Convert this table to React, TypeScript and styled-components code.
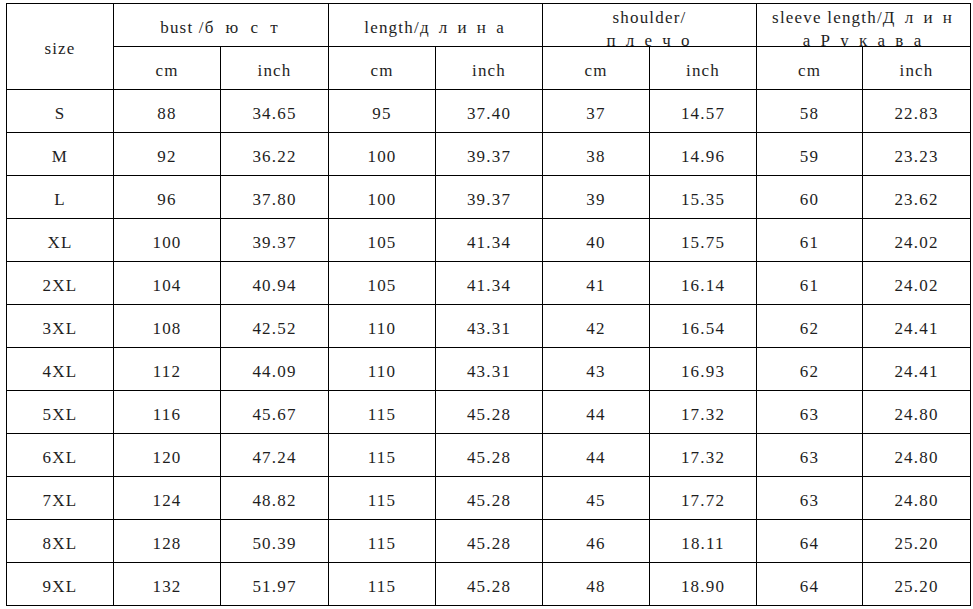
import React from 'react';
import styled, { createGlobalStyle } from 'styled-components';

const GlobalStyle = createGlobalStyle`
  html, body {
    margin: 0;
    padding: 0;
    background: #ffffff;
  }
  body {
    font-family: "Liberation Serif", "Noto Sans CJK SC", serif;
  }
`;

const Page = styled.div`
  width: 973px;
  height: 609px;
  overflow: hidden;
  padding: 3px 0 0 6px;
  box-sizing: border-box;
  background: #ffffff;
`;

const Sheet = styled.div`
  display: inline-grid;
  grid-template-columns: 106px 106px 107px 106px 106px 106px 106px 105px 107px;
  grid-template-rows: repeat(14, 42px);
  gap: 1px;
  padding: 1px;
  background: #000000;
`;

interface CellProps {
  $span?: number;
  $rows?: number;
  $wrap?: boolean;
}

const Cell = styled.div<CellProps>`
  grid-column: span ${({ $span }) => $span || 1};
  grid-row: span ${({ $rows }) => $rows || 1};
  background: #ffffff;
  color: #1e1e1e;
  font-size: 17px;
  letter-spacing: 1.2px;
  display: flex;
  justify-content: center;
  align-items: ${({ $wrap }) => ($wrap ? 'flex-start' : 'center')};
  padding-top: ${({ $wrap }) => ($wrap ? '2px' : '5px')};
  line-height: ${({ $wrap }) => ($wrap ? '23px' : 'normal')};
  text-align: center;
  white-space: pre;
  overflow: hidden;
  box-sizing: border-box;
`;

// cyrillic parts are set wide, like the full-width glyphs of the original
const Ru = styled.span<{ $gap?: number }>`
  letter-spacing: ${({ $gap }) => $gap ?? 3}px;
`;

const rows: string[][] = [
  ['S', '88', '34.65', '95', '37.40', '37', '14.57', '58', '22.83'],
  ['M', '92', '36.22', '100', '39.37', '38', '14.96', '59', '23.23'],
  ['L', '96', '37.80', '100', '39.37', '39', '15.35', '60', '23.62'],
  ['XL', '100', '39.37', '105', '41.34', '40', '15.75', '61', '24.02'],
  ['2XL', '104', '40.94', '105', '41.34', '41', '16.14', '61', '24.02'],
  ['3XL', '108', '42.52', '110', '43.31', '42', '16.54', '62', '24.41'],
  ['4XL', '112', '44.09', '110', '43.31', '43', '16.93', '62', '24.41'],
  ['5XL', '116', '45.67', '115', '45.28', '44', '17.32', '63', '24.80'],
  ['6XL', '120', '47.24', '115', '45.28', '44', '17.32', '63', '24.80'],
  ['7XL', '124', '48.82', '115', '45.28', '45', '17.72', '63', '24.80'],
  ['8XL', '128', '50.39', '115', '45.28', '46', '18.11', '64', '25.20'],
  ['9XL', '132', '51.97', '115', '45.28', '48', '18.90', '64', '25.20'],
];

const units = ['cm', 'inch', 'cm', 'inch', 'cm', 'inch', 'cm', 'inch'];

const App: React.FC = () => {
  return (
    <Page>
      <GlobalStyle />
      <Sheet>
        <Cell $rows={2}>size</Cell>
        <Cell $span={2}>
          bust /<Ru $gap={4}>б ю с т</Ru>
        </Cell>
        <Cell $span={2}>
          length/<Ru>д л и н а</Ru>
        </Cell>
        <Cell $span={2} $wrap>
          <div>
            shoulder/
            <br />
            <Ru>п л е ч о</Ru>
          </div>
        </Cell>
        <Cell $span={2} $wrap>
          <div>
            sleeve length/<Ru>Д л и н</Ru>
            <br />
            <Ru>а Р у к а в а</Ru>
          </div>
        </Cell>

        {units.map((u, i) => (
          <Cell key={'u' + i}>{u}</Cell>
        ))}

        {rows.map((row) =>
          row.map((value, i) => <Cell key={row[0] + '-' + i}>{value}</Cell>)
        )}
      </Sheet>
    </Page>
  );
};

export default App;
